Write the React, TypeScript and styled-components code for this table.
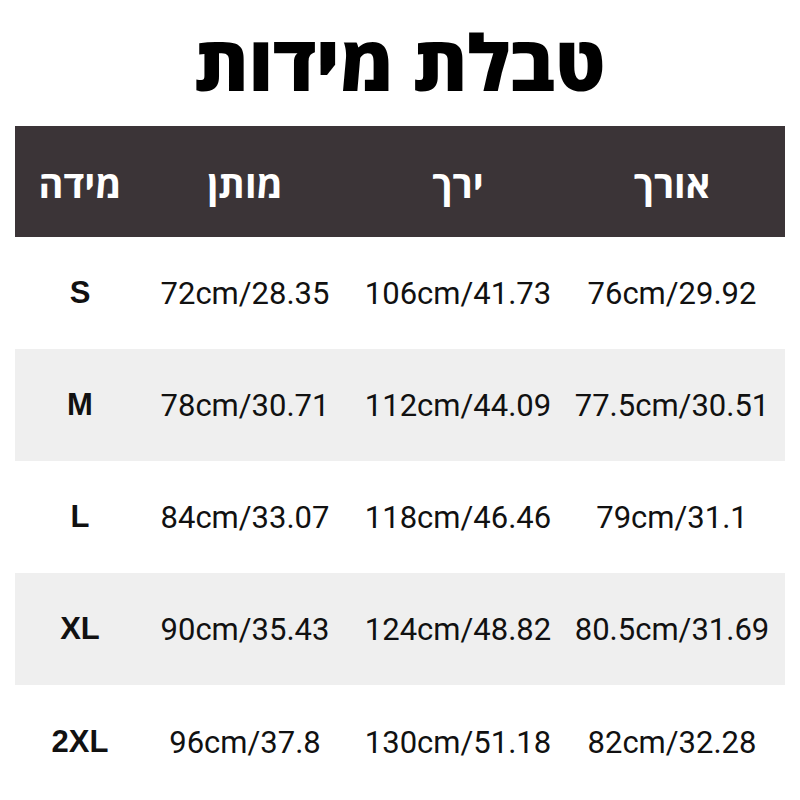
import React from "react";
import styled, {createGlobalStyle} from "styled-components";

const GlobalStyle = createGlobalStyle`
  html, body {
    margin: 0;
    padding: 0;
    background: #ffffff;
  }
  body {
    font-family: "Open Sans", "Liberation Sans", sans-serif;
  }
`;

const Page = styled.div`
  width: 800px;
  height: 800px;
  overflow: hidden;
  background: #ffffff;
  display: flex;
  flex-direction: column;
`;

const Title = styled.h1`
  margin: 0;
  height: 126px;
  display: flex;
  align-items: center;
  justify-content: center;
  font-family: "Open Sans", "Liberation Sans", sans-serif;
  font-weight: 800;
  font-size: 77px;
  color: #000;
  direction: rtl;
  padding-bottom: 4px;
  box-sizing: border-box;
`;

const Table = styled.div`
  margin: 0 15px;
  display: flex;
  flex-direction: column;
`;

const Row = styled.div<{ $bg: string; $h: number }>`
  display: grid;
  grid-template-columns: 130px 200px 226px 202px;
  padding-right: 12px;
  height: ${p => p.$h}px;
  background: ${p => p.$bg};
  align-items: center;
`;

const HeadCell = styled.div`
  text-align: center;
  color: #ffffff;
  font-family: "Open Sans", "Liberation Sans", sans-serif;
  font-weight: 700;
  font-size: 38px;
  direction: rtl;
  padding-top: 3px;
`;

const SizeCell = styled.div`
  text-align: center;
  font-family: "Liberation Sans", Arial, sans-serif;
  font-weight: 700;
  font-size: 31px;
  color: #111;
`;

const ValueCell = styled.div`
  text-align: center;
  font-family: Roboto, "Liberation Sans", sans-serif;
  font-size: 31px;
  color: #111;
  white-space: nowrap;
`;

const headers = ["מידה", "מותן", "ירך", "אורך"];

const rows = [
    {size: "S", waist: "72cm/28.35", hip: "106cm/41.73", length: "76cm/29.92"},
    {size: "M", waist: "78cm/30.71", hip: "112cm/44.09", length: "77.5cm/30.51"},
    {size: "L", waist: "84cm/33.07", hip: "118cm/46.46", length: "79cm/31.1"},
    {size: "XL", waist: "90cm/35.43", hip: "124cm/48.82", length: "80.5cm/31.69"},
    {size: "2XL", waist: "96cm/37.8", hip: "130cm/51.18", length: "82cm/32.28"},
];

const App = () => (
    <Page>
        <GlobalStyle/>
        <Title>טבלת מידות</Title>
        <Table>
            <Row $bg="#3b3437" $h={111}>
                {headers.map(h => <HeadCell key={h}>{h}</HeadCell>)}
            </Row>
            {rows.map((r, i) => (
                <Row key={r.size} $bg={i % 2 === 1 ? "#efefef" : "#ffffff"} $h={i === 4 ? 114 : 112}>
                    <SizeCell>{r.size}</SizeCell>
                    <ValueCell>{r.waist}</ValueCell>
                    <ValueCell>{r.hip}</ValueCell>
                    <ValueCell>{r.length}</ValueCell>
                </Row>
            ))}
        </Table>
    </Page>
);

export default App;
